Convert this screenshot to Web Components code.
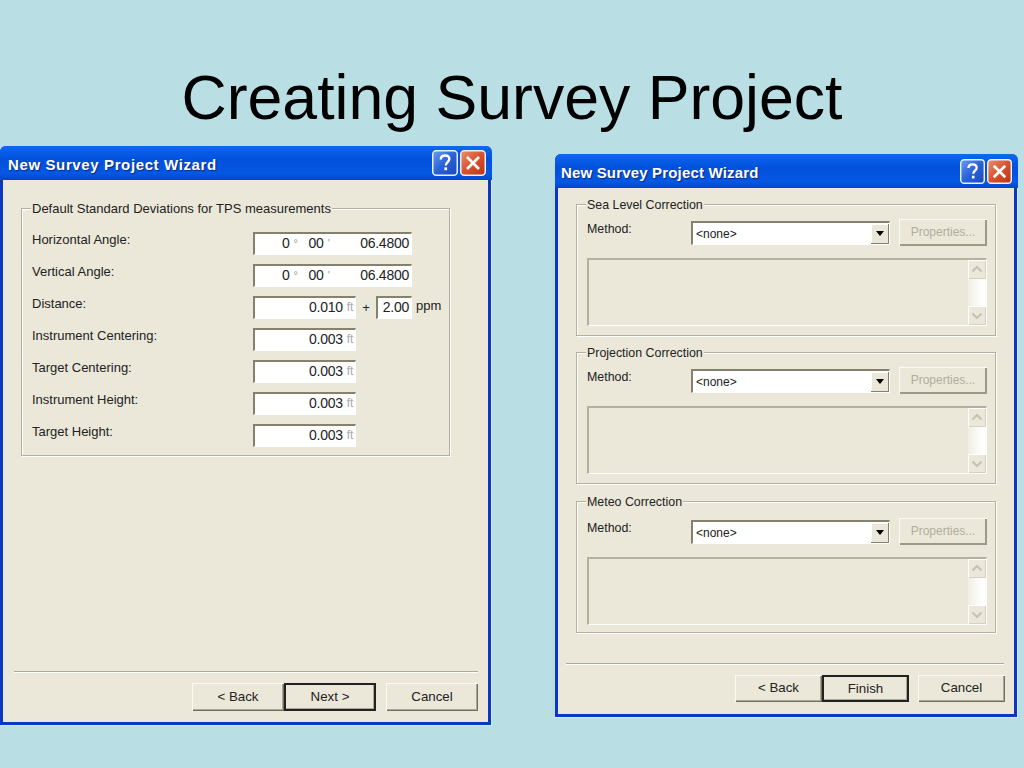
<!DOCTYPE html>
<html>
<head>
<meta charset="utf-8">
<title>Creating Survey Project</title>
<style>
  html, body { margin: 0; height: 100%; }
  body { background: #b9dfe4; font-family: "Liberation Sans", Arial, sans-serif; overflow: hidden; }
  #win1 { position: absolute; left: 0; top: 146px; width: 492px; height: 580px; }
  #win2 { position: absolute; left: 555px; top: 154px; width: 463px; height: 564px; }
  slide-title { position: absolute; left: 0; top: 62px; width: 1024px; }
</style>
</head>
<body>
<slide-title>Creating Survey Project</slide-title>

<wizard-window id="win1" caption="New Survey Project Wizard" style="--sep-left:14px;--sep-right:14px;--foot-right:14px;--foot-top:10px;--sep-top:525px;--cap-left:8px;--cap-space:.62px;--ctrl:26px;--ctrl-right:6px">
  <field-group label="Default Standard Deviations for TPS measurements" style="margin:28px 0 0 21px;width:429px;height:248px;--pad-top:18px">
    <measure-row label="Horizontal Angle:" kind="angle"></measure-row>
    <measure-row label="Vertical Angle:" kind="angle"></measure-row>
    <measure-row label="Distance:" value="0.010" ppm="2.00"></measure-row>
    <measure-row label="Instrument Centering:" value="0.003"></measure-row>
    <measure-row label="Target Centering:" value="0.003"></measure-row>
    <measure-row label="Instrument Height:" value="0.003"></measure-row>
    <measure-row label="Target Height:" value="0.003"></measure-row>
  </field-group>
  <xp-button slot="buttons" style="width:92px">&lt; Back</xp-button>
  <xp-button slot="buttons" style="width:92px" default>Next &gt;</xp-button>
  <xp-button slot="buttons" style="width:92px;margin-left:10px">Cancel</xp-button>
</wizard-window>

<wizard-window id="win2" caption="New Survey Project Wizard" style="--sep-left:11px;--sep-right:14px;--foot-right:13px;--foot-top:10px;--sep-top:509px;--cap-left:6px;--cap-space:.17px;--ctrl:25px;--ctrl-right:6px;--group-font:12.4px">
  <correction-group label="Sea Level Correction" style="margin:16px 0 0 21px"></correction-group>
  <correction-group label="Projection Correction" style="margin:16px 0 0 21px"></correction-group>
  <correction-group label="Meteo Correction" style="margin:17px 0 0 21px;--nudge:2px"></correction-group>
  <xp-button slot="buttons" style="width:87px;height:27px">&lt; Back</xp-button>
  <xp-button slot="buttons" style="width:87px;height:27px" default>Finish</xp-button>
  <xp-button slot="buttons" style="width:87px;height:27px;margin-left:9px">Cancel</xp-button>
</wizard-window>

<script>
// Slide heading
customElements.define("slide-title", class extends HTMLElement {
  constructor() {
    super();
    this.attachShadow({ mode: "open" }).innerHTML = `
      <style>
        :host { display: block; text-align: center; font-size: 62.6px; line-height: 70px; color: #000; }
      </style>
      <slot></slot>`;
  }
});

// XP style window: titlebar, body, separator and button row
customElements.define("wizard-window", class extends HTMLElement {
  constructor() {
    super();
    this.attachShadow({ mode: "open" }).innerHTML = `
      <style>
        :host {
          display: flex; flex-direction: column; box-sizing: border-box;
          border-radius: 6px 6px 0 0; overflow: hidden;
          background: #0b38c0; padding: 0 4px 4px 3px;
          box-shadow: inset -1px -1px 0 #d8e8f0;
        }
        .bar {
          flex: none; height: 34px; margin: 0 -4px 0 -3px; padding: 0 var(--ctrl-right) 0 var(--cap-left);
          display: flex; align-items: center; justify-content: space-between;
          background: linear-gradient(#0a6cf0 0, #0a62ec 10%, #0350dc 40%, #0458e4 80%, #0447c6 100%);
          color: #fff; font-weight: bold; font-size: 15px; letter-spacing: var(--cap-space);
          text-shadow: 1px 1px 1px #0a2a80;
        }
        .cap { padding-top: 2px; }
        .ctrl { display: flex; gap: 2px; }
        .ctrl svg { display: block; width: var(--ctrl); height: var(--ctrl); }
        .body { flex: 1; position: relative; display: flex; flex-direction: column; background: #ebe8d9; }
        .content { margin-left: -3px; }
        .sep { position: absolute; top: calc(var(--sep-top) - 34px); left: calc(var(--sep-left) - 3px); right: calc(var(--sep-right) - 4px); height: 0;
          border-top: 1px solid #aca899; border-bottom: 1px solid #fff; }
        .foot { position: absolute; top: calc(var(--sep-top) - 34px + 2px + var(--foot-top)); right: calc(var(--foot-right) - 4px); display: flex; }
      </style>
      <div class="bar">
        <span class="cap"></span>
        <span class="ctrl">
          <svg viewBox="0 0 26 26">
            <defs><linearGradient id="h" x1="0" y1="0" x2="1" y2="1"><stop offset="0" stop-color="#6c9cf0"/><stop offset=".5" stop-color="#2a62d8"/><stop offset="1" stop-color="#1c48b8"/></linearGradient></defs>
            <rect x=".75" y=".75" width="24.5" height="24.5" rx="3.5" fill="url(#h)" stroke="#e8f0fa" stroke-width="1.5"/>
            <path d="M8.800 9.400c0-2.600 1.900-3.900 4.300-3.900 2.500 0 4.200 1.400 4.200 3.500 0 3-3.500 3.200-3.500 6.400" fill="none" stroke="#fff" stroke-width="2.400"/>
            <rect x="12.400" y="17.400" width="2.700" height="2.800" fill="#fff"/>
          </svg>
          <svg viewBox="0 0 26 26">
            <defs><linearGradient id="x" x1="0" y1="0" x2="1" y2="1"><stop offset="0" stop-color="#ec9272"/><stop offset=".5" stop-color="#d9512c"/><stop offset="1" stop-color="#b83414"/></linearGradient></defs>
            <rect x=".75" y=".75" width="24.5" height="24.5" rx="3.5" fill="url(#x)" stroke="#e8f0fa" stroke-width="1.5"/>
            <path d="M7 7l12 12M19 7L7 19" stroke="#fff" stroke-width="2.800" fill="none"/>
          </svg>
        </span>
      </div>
      <div class="body">
        <div class="content"><slot></slot></div>
        <div class="sep"></div>
        <div class="foot"><slot name="buttons"></slot></div>
      </div>`;
  }
  connectedCallback() {
    this.shadowRoot.querySelector(".cap").textContent = this.getAttribute("caption");
  }
});

// Etched frame with the caption sitting on its top edge
customElements.define("field-group", class extends HTMLElement {
  constructor() {
    super();
    this.attachShadow({ mode: "open" }).innerHTML = `
      <style>
        :host {
          display: block; box-sizing: border-box; position: relative;
          border: 1px solid #b3b0a2; box-shadow: 1px 1px 0 #fff, inset 1px 1px 0 #fff;
          font-size: var(--group-font, 13px); color: #222; padding: var(--pad-top, 0) 0 0 10px;
        }
        .legend { position: absolute; left: 9px; top: -8px; padding: 0 1px; background: #ebe8d9; line-height: 16px; white-space: nowrap; }
      </style>
      <span class="legend"></span>
      <slot></slot>`;
  }
  connectedCallback() {
    this.shadowRoot.querySelector(".legend").textContent = this.getAttribute("label");
  }
});

const sunken = `border: 2px solid; border-color: #85816f #fff #fff #85816f; border-right-width: 1px; border-bottom-width: 1px; box-sizing: border-box; background: #fff;`;

// One line of the TPS form
customElements.define("measure-row", class extends HTMLElement {
  constructor() {
    super();
    this.attachShadow({ mode: "open" });
  }
  connectedCallback() {
    const label = this.getAttribute("label");
    const ppm = this.getAttribute("ppm");
    let field;
    if (this.getAttribute("kind") === "angle") {
      field = `<span class="box wide"><span class="d">0</span><i class="deg">°</i><span class="m">00</span><i class="deg">'</i><span class="s">06.4800</span></span>`;
    } else {
      field = `<span class="box short"><span>${this.getAttribute("value")}</span><i class="ft">ft</i></span>`;
      if (ppm) field += `<span class="plus">+</span><span class="box ppmv">${ppm}</span><span class="unit">ppm</span>`;
    }
    this.shadowRoot.innerHTML = `
      <style>
        :host { display: grid; grid-template-columns: 221px 1fr; height: 32px; align-items: center; color: #222; }
        .l { margin-bottom: 7px; }
        .f { display: flex; align-items: center; }
        .box { ${sunken} height: 23px; display: flex; align-items: center; justify-content: flex-end; padding: 0 2px 2px 0; font-size: 14px; letter-spacing: -.25px; color: #222; }
        .wide { width: 159px; justify-content: flex-start; }
        .short { width: 103px; }
        .ppmv { width: 36px; }
        .d { margin-left: 27px; }
        i { font-style: normal; color: #999; }
        .deg { margin-left: 4px; font-size: 11px; width: 10px; }
        .m { margin-left: 5px; }
        .s { margin-left: auto; }
        .ft { margin-left: 4px; font-size: 12px; color: #a8a8a8; }
        .plus { width: 20px; text-align: center; font-size: 13px; }
        .unit { margin-left: 4px; margin-bottom: 3px; font-size: 13px; }
      </style>
      <span class="l">${label}</span>
      <span class="f">${field}</span>`;
  }
});

// Right hand groups: method combo, properties button, read-only text box
customElements.define("correction-group", class extends HTMLElement {
  constructor() {
    super();
    this.attachShadow({ mode: "open" });
  }
  connectedCallback() {
    this.shadowRoot.innerHTML = `
      <style>
        :host { display: block; width: 420px; }
        field-group { height: 132px; padding-top: 0; }
        .top { display: grid; grid-template-columns: 104px 199px 88px; height: 53px; margin-top: var(--nudge, 0); }
        .lbl { padding-top: 16px; line-height: 16px; }
        .combo { ${sunken} margin-top: 16px; height: 24px; display: flex; align-items: center; justify-content: space-between; font-size: 12px; color: #222; padding-left: 3px; }
        .arrow { width: 18px; height: 20px; background: #ebe8d9; box-shadow: inset -1px -1px 0 #85816f, inset 1px 1px 0 #fff; display: flex; align-items: center; justify-content: center; }
        .arrow b { border: 4.5px solid transparent; border-top: 5px solid #000; border-bottom: 0; }
        .props { margin: 14px 0 0 9px; width: 88px; height: 27px; box-sizing: border-box; padding-bottom: 2px; display: flex; align-items: center; justify-content: center; font-size: 12px; color: #b0ad9d;
          box-shadow: inset 1px 1px 0 #fbfaf4, inset -2px -2px 0 #9c9986; }
        .memo { box-sizing: border-box; width: 400px; height: 68px; border: 2px solid; border-color: #b4b1a1 #fff #fff #b4b1a1; border-right-width: 1px; border-bottom-width: 1px; display: flex; justify-content: flex-end; }
        .sb { width: 18px; height: 100%; background: linear-gradient(90deg, #f0eee4, #fbfbf9 60%, #fff); display: flex; flex-direction: column; justify-content: space-between; }
        .sb svg { display: block; background: #ebe8d9; box-shadow: inset 1px 1px 0 #fff, inset -1px -1px 0 #d4d1c2; }
      </style>
      <field-group label="${this.getAttribute("label")}">
        <div class="top">
          <span class="lbl">Method:</span>
          <div class="combo"><span>&lt;none&gt;</span><span class="arrow"><b></b></span></div>
          <div class="props">Properties...</div>
        </div>
        <div class="memo">
          <div class="sb">
            <svg width="18" height="19" viewBox="0 0 18 19"><path d="M4.500 11.500L9 7l4.500 4.500" fill="none" stroke="#c4c2b6" stroke-width="2"/></svg>
            <svg width="18" height="19" viewBox="0 0 18 19"><path d="M4.500 7.500L9 12l4.500-4.500" fill="none" stroke="#c4c2b6" stroke-width="2"/></svg>
          </div>
        </div>
      </field-group>`;
  }
});

customElements.define("xp-button", class extends HTMLElement {
  constructor() {
    super();
    this.attachShadow({ mode: "open" }).innerHTML = `
      <style>
        :host {
          display: flex; box-sizing: border-box; height: 28px; padding-bottom: 2px; align-items: center; justify-content: center;
          font-size: 13.3px; color: #222; background: #ebe8d9;
          box-shadow: inset 1px 1px 0 #fbfaf4, inset -1px -1px 0 #716f64, inset -2px -2px 0 #aca899;
        }
        :host([default]) { border: 2px solid #222; padding-bottom: 1px; box-shadow: inset -1px -1px 0 #aca899; }
      </style>
      <slot></slot>`;
  }
});
</script>
</body>
</html>
